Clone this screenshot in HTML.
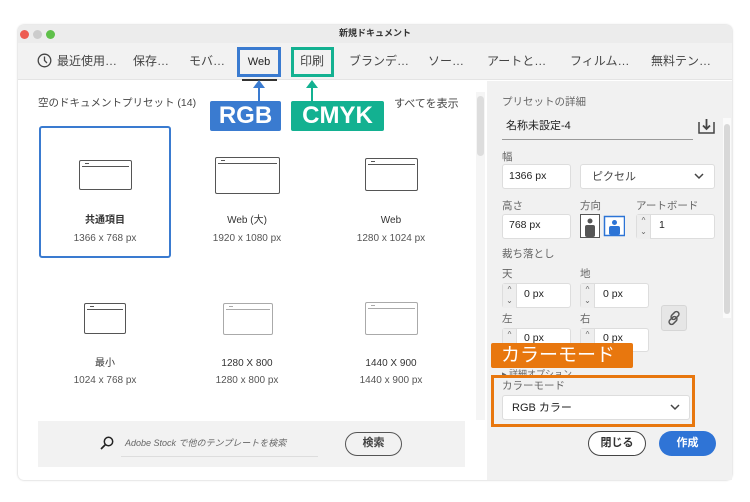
<!DOCTYPE html>
<html><head><meta charset="utf-8"><style>
*{margin:0;padding:0;box-sizing:border-box}
body{width:750px;height:502px;background:#fff;position:relative;overflow:hidden;font-family:"Liberation Sans","Noto Sans CJK JP",sans-serif;color:#333}
.a{position:absolute}
.win{left:18px;top:25px;width:714px;height:455px;background:#fff;border-radius:6px;box-shadow:0 0 2px rgba(0,0,0,.25);overflow:hidden}
.t{font-size:12px;color:#444;white-space:nowrap;line-height:14px}
.inp{background:#fff;border:1px solid #ddd;border-radius:3px}
.lbl{font-size:10.5px;color:#666;line-height:12px}
.icon{border:1.6px solid #555;border-radius:2px;background:#fff}
.icon:after{content:"";position:absolute;left:2px;right:2px;top:5px;border-top:1.3px solid #555}
.icon:before{content:"";position:absolute;left:5px;top:2px;width:4px;border-top:1.2px solid #555}
.lt{border-color:#aaa}.lt:after,.lt:before{border-color:#aaa}
.nm{font-size:10px;color:#333;text-align:center;width:130px;line-height:12px}
.sz{font-size:10px;color:#555;text-align:center;width:130px;line-height:12px}
.spin{width:14px;height:24px;background:#eee;border-right:1px solid #ddd;font-size:8px;color:#666;text-align:center;line-height:11px}
.lab{color:#fff;font-size:24px;font-weight:bold;text-align:center;line-height:30px;border-radius:2px;letter-spacing:0px}
</style></head><body>
<div class="a win"></div>
<div class="a" style="left:18px;top:25px;width:714px;height:18px;background:#ececec;border-radius:6px 6px 0 0"></div>
<div class="a" style="left:20px;top:30px;width:9px;height:9px;border-radius:50%;background:#ed5c52"></div>
<div class="a" style="left:33px;top:30px;width:9px;height:9px;border-radius:50%;background:#ccc"></div>
<div class="a" style="left:46px;top:30px;width:9px;height:9px;border-radius:50%;background:#5fc04a"></div>
<div class="a t" style="left:0;width:750px;text-align:center;top:28px;font-size:9px;color:#333;font-weight:bold;line-height:11px">新規ドキュメント</div>
<div class="a" style="left:18px;top:43px;width:714px;height:37px;background:#f2f2f2;border-bottom:1px solid #e4e4e4"></div>
<svg class="a" style="left:37px;top:53px" width="15" height="15"><circle cx="7.5" cy="7.5" r="6.3" fill="none" stroke="#444" stroke-width="1.3"/><path d="M7.5 3.5V7.5L10 10" fill="none" stroke="#444" stroke-width="1.3"/></svg>
<div class="a t" style="left:57px;top:54px">最近使用…</div>
<div class="a t" style="left:133px;top:54px">保存…</div>
<div class="a t" style="left:189px;top:54px">モバ…</div>
<div class="a" style="left:237px;top:47px;width:44px;height:30px;border:3px solid #3a7bd0"></div>
<div class="a t" style="left:237px;width:44px;text-align:center;top:55px;font-size:11px;color:#222">Web</div>
<div class="a" style="left:242px;top:79px;width:35px;height:2px;background:#333"></div>
<div class="a" style="left:291px;top:47px;width:43px;height:30px;border:3px solid #13b191"></div>
<div class="a t" style="left:300px;top:54px">印刷</div>
<div class="a t" style="left:349px;top:54px">ブランデ…</div>
<div class="a t" style="left:428px;top:54px">ソー…</div>
<div class="a t" style="left:487px;top:54px">アートと…</div>
<div class="a t" style="left:570px;top:54px">フィルム…</div>
<div class="a t" style="left:651px;top:54px">無料テン…</div>
<!-- arrows -->
<div class="a" style="left:258px;top:86px;width:2px;height:16px;background:#3a7bd0"></div>
<div class="a" style="left:253px;top:80px;border-left:6px solid transparent;border-right:6px solid transparent;border-bottom:8px solid #3a7bd0"></div>
<div class="a" style="left:311px;top:86px;width:2px;height:16px;background:#13b191"></div>
<div class="a" style="left:306px;top:80px;border-left:6px solid transparent;border-right:6px solid transparent;border-bottom:8px solid #13b191"></div>
<div class="a lab" style="left:210px;top:101px;width:71px;height:30px;background:#3a7bd0">RGB</div>
<div class="a lab" style="left:291px;top:101px;width:93px;height:30px;background:#13b191">CMYK</div>
<div class="a t" style="left:38px;top:96px;font-size:10.5px">空のドキュメントプリセット (14)</div>
<div class="a t" style="left:394px;top:97px;font-size:11px">すべてを表示</div>
<!-- scroll -->
<div class="a" style="left:476px;top:92px;width:9px;height:328px;background:#f5f5f5"></div>
<div class="a" style="left:477px;top:96px;width:7px;height:60px;background:#ddd;border-radius:4px"></div>
<!-- cards -->
<div class="a" style="left:39px;top:126px;width:132px;height:132px;border:2px solid #3a7bd0;border-radius:3px"></div>
<div class="a icon" style="left:79px;top:160px;width:53px;height:30px"></div>
<div class="a nm" style="left:40px;top:215px;font-weight:bold">共通項目</div>
<div class="a sz" style="left:40px;top:233px">1366 x 768 px</div>
<div class="a icon" style="left:215px;top:157px;width:65px;height:37px"></div>
<div class="a nm" style="left:182px;top:215px">Web (大)</div>
<div class="a sz" style="left:182px;top:233px">1920 x 1080 px</div>
<div class="a icon" style="left:365px;top:158px;width:53px;height:33px"></div>
<div class="a nm" style="left:326px;top:215px">Web</div>
<div class="a sz" style="left:326px;top:233px">1280 x 1024 px</div>
<div class="a icon" style="left:84px;top:303px;width:42px;height:31px"></div>
<div class="a nm" style="left:40px;top:358px">最小</div>
<div class="a sz" style="left:40px;top:375px">1024 x 768 px</div>
<div class="a icon lt" style="left:223px;top:303px;width:50px;height:32px"></div>
<div class="a nm" style="left:182px;top:358px">1280 X 800</div>
<div class="a sz" style="left:182px;top:375px">1280 x 800 px</div>
<div class="a icon lt" style="left:365px;top:302px;width:53px;height:33px"></div>
<div class="a nm" style="left:326px;top:358px">1440 X 900</div>
<div class="a sz" style="left:326px;top:375px">1440 x 900 px</div>
<!-- search -->
<div class="a" style="left:38px;top:421px;width:427px;height:46px;background:#f2f2f2"></div>
<svg class="a" style="left:100px;top:436px" width="14" height="14"><circle cx="8.5" cy="5.5" r="4.2" fill="none" stroke="#222" stroke-width="1.5"/><path d="M5.5 8.5L1 13" stroke="#222" stroke-width="1.7"/></svg>
<div class="a t" style="left:125px;top:436px;font-size:9px;color:#666;font-style:italic">Adobe Stock で他のテンプレートを検索</div>
<div class="a" style="left:121px;top:456px;width:197px;height:1px;background:#ddd"></div>
<div class="a" style="left:345px;top:432px;width:57px;height:24px;border:1.5px solid #555;border-radius:12px;font-size:11px;text-align:center;line-height:21px;color:#444;font-weight:bold">検索</div>
<!-- right panel -->
<div class="a" style="left:487px;top:81px;width:245px;height:399px;background:#f1f1f1"></div>
<div class="a" style="left:723px;top:118px;width:8px;height:200px;background:#fafafa"></div>
<div class="a" style="left:724px;top:124px;width:6px;height:190px;background:#d8d8d8;border-radius:3px"></div>
<div class="a lbl" style="left:502px;top:96px">プリセットの詳細</div>
<div class="a t" style="left:506px;top:119px;font-size:11px;color:#222">名称未設定-4</div>
<div class="a" style="left:502px;top:139px;width:191px;height:1px;background:#999"></div>
<svg class="a" style="left:698px;top:118px" width="17" height="16"><path d="M1 4V15H16V4" fill="none" stroke="#444" stroke-width="1.5"/><path d="M8.5 1V11M5 7.5L8.5 11L12 7.5" fill="none" stroke="#444" stroke-width="1.8"/></svg>
<div class="a lbl" style="left:502px;top:151px">幅</div>
<div class="a inp" style="left:502px;top:164px;width:69px;height:25px"></div>
<div class="a t" style="left:509px;top:169px;font-size:10.5px;color:#222">1366 px</div>
<div class="a inp" style="left:580px;top:164px;width:135px;height:25px"></div>
<div class="a t" style="left:592px;top:170px;font-size:11px">ピクセル</div>
<svg class="a" style="left:694px;top:173px" width="10" height="7"><path d="M1 1L5 5L9 1" fill="none" stroke="#444" stroke-width="1.5"/></svg>
<div class="a lbl" style="left:502px;top:200px">高さ</div>
<div class="a lbl" style="left:580px;top:200px">方向</div>
<div class="a lbl" style="left:636px;top:200px">アートボード</div>
<div class="a inp" style="left:502px;top:214px;width:69px;height:25px"></div>
<div class="a t" style="left:509px;top:218px;font-size:10.5px;color:#222">768 px</div>
<svg class="a" style="left:580px;top:214px" width="45" height="24"><rect x="0.5" y="0.5" width="19" height="23" fill="#fff" stroke="#555"/><circle cx="10" cy="7" r="2.5" fill="#555"/><rect x="5" y="11" width="10" height="12" rx="2" fill="#555"/><rect x="24.5" y="2.5" width="20" height="19" fill="#fff" stroke="#2c74d6" stroke-width="1.5"/><circle cx="34.5" cy="8.5" r="2.5" fill="#2c74d6"/><rect x="29" y="12" width="11" height="9" rx="2" fill="#2c74d6"/></svg>
<div class="a inp" style="left:636px;top:214px;width:79px;height:25px"></div>
<div class="a spin" style="left:637px;top:215px">^<br>⌄</div>
<div class="a t" style="left:659px;top:218px;font-size:10.5px;color:#222">1</div>
<div class="a lbl" style="left:502px;top:248px">裁ち落とし</div>
<div class="a lbl" style="left:502px;top:268px">天</div>
<div class="a lbl" style="left:580px;top:268px">地</div>
<div class="a inp" style="left:502px;top:283px;width:69px;height:25px"></div>
<div class="a spin" style="left:503px;top:284px">^<br>⌄</div>
<div class="a t" style="left:524px;top:287px;font-size:10.5px;color:#222">0 px</div>
<div class="a inp" style="left:580px;top:283px;width:69px;height:25px"></div>
<div class="a spin" style="left:581px;top:284px">^<br>⌄</div>
<div class="a t" style="left:603px;top:287px;font-size:10.5px;color:#222">0 px</div>
<div class="a" style="left:661px;top:305px;width:26px;height:26px;background:#e6e6e6;border:1px solid #d6d6d6;border-radius:3px"></div>
<svg class="a" style="left:666px;top:310px" width="16" height="16"><g fill="none" stroke="#555" stroke-width="1.5"><rect x="6.5" y="1" width="5" height="9" rx="2.5" transform="rotate(45 9 5.5)"/><rect x="4.5" y="6" width="5" height="9" rx="2.5" transform="rotate(45 7 10.5)"/></g></svg>
<div class="a lbl" style="left:502px;top:313px">左</div>
<div class="a lbl" style="left:580px;top:313px">右</div>
<div class="a inp" style="left:502px;top:328px;width:69px;height:24px"></div>
<div class="a spin" style="left:503px;top:329px">^</div>
<div class="a t" style="left:524px;top:331px;font-size:10.5px;color:#222">0 px</div>
<div class="a inp" style="left:580px;top:328px;width:69px;height:24px"></div>
<div class="a spin" style="left:581px;top:329px">^</div>
<div class="a t" style="left:603px;top:331px;font-size:10.5px;color:#222">0 px</div>
<div class="a lbl" style="left:502px;top:368px;font-size:9px">▸ 詳細オプション</div>
<div class="a" style="left:491px;top:343px;width:142px;height:25px;background:#e8770e;border-radius:2px;color:#fff;font-size:19px;line-height:25px;padding-left:10px">カラーモード</div>
<div class="a" style="left:491px;top:375px;width:204px;height:52px;border:3px solid #e8770e;background:#f1f1f1"></div>
<div class="a lbl" style="left:502px;top:380px">カラーモード</div>
<div class="a inp" style="left:502px;top:395px;width:188px;height:25px"></div>
<div class="a t" style="left:512px;top:401px;font-size:11px;color:#222">RGB カラー</div>
<svg class="a" style="left:670px;top:404px" width="10" height="7"><path d="M1 1L5 5L9 1" fill="none" stroke="#444" stroke-width="1.5"/></svg>
<div class="a" style="left:588px;top:431px;width:58px;height:25px;border:1.5px solid #444;border-radius:13px;background:#fff;font-size:11px;text-align:center;line-height:22px;font-weight:bold;color:#333">閉じる</div>
<div class="a" style="left:659px;top:431px;width:57px;height:25px;border-radius:13px;background:#2f74d6;font-size:11px;text-align:center;line-height:25px;font-weight:bold;color:#fff">作成</div>
</body></html>
